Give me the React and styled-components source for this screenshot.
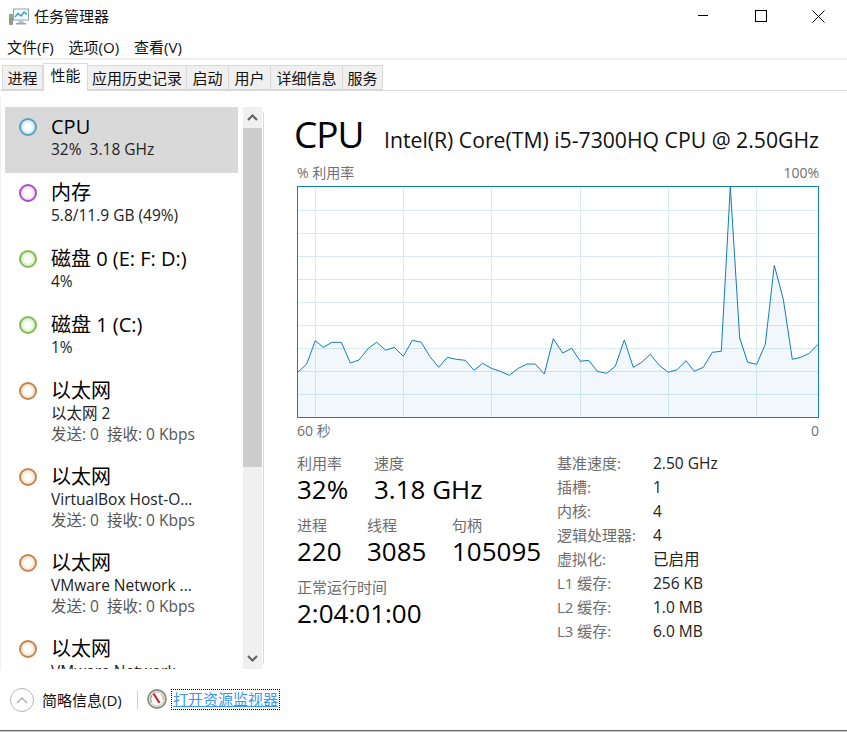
import React from 'react';
import styled, { createGlobalStyle } from 'styled-components';

const GlobalStyle = createGlobalStyle`
    html, body {
        margin: 0;
        padding: 0;
        background: #fff;
    }
    body {
        font-family: "Open Sans", "Noto Sans CJK SC", sans-serif;
        color: #000;
    }
`;

const Window = styled.div`
    width: 847px;
    height: 732px;
    display: flex;
    flex-direction: column;
    overflow: hidden;
    background: #fff;
`;

const TitleBar = styled.div`
    height: 34px;
    flex: none;
    display: flex;
    align-items: flex-start;
`;

const AppIcon = styled.svg`
    width: 20px;
    height: 18px;
    margin: 8px 5px 0 9px;
`;

const AppTitle = styled.div`
    font-size: 15px;
    line-height: 32px;
    flex: 1;
    color: #111;
`;

const WindowControls = styled.div`
    display: flex;
    gap: 1px;
`;

const WindowButton = styled.div`
    width: 57px;
    height: 32px;
    display: flex;
    align-items: center;
    justify-content: center;
`;

const MenuBar = styled.div`
    height: 24px;
    flex: none;
    display: flex;
    gap: 15px;
    padding-left: 7px;
    border-bottom: 2px solid #f0f0f0;
`;

const MenuItem = styled.div`
    font-size: 15px;
    line-height: 26px;
    color: #111;
`;

const TabStrip = styled.div`
    height: 31px;
    flex: none;
    display: flex;
    align-items: flex-end;
    padding-left: 2px;
    border-bottom: 1px solid #d9d9d9;
    box-sizing: border-box;
`;

const Tab = styled.div`
    width: ${(p) => p.$width}px;
    box-sizing: border-box;
    height: ${(p) => (p.$active ? 28 : 25)}px;
    margin-bottom: ${(p) => (p.$active ? -1 : 0)}px;
    font-size: 15px;
    line-height: ${(p) => (p.$active ? 23 : 25)}px;
    text-align: center;
    color: #111;
    background: ${(p) => (p.$active ? '#fff' : '#f0f0f0')};
    border: 1px solid #d9d9d9;
    border-left-width: ${(p) => (p.$first || p.$active ? 1 : 0)}px;
    border-bottom-width: ${(p) => (p.$active ? 0 : 1)}px;
    border-right-width: 1px;
    position: relative;
    z-index: ${(p) => (p.$active ? 1 : 0)};
`;

const Main = styled.div`
    flex: 1;
    min-height: 0;
    display: flex;
`;

const Sidebar = styled.div`
    width: 264px;
    flex: none;
    display: flex;
    box-sizing: border-box;
    margin-top: 6px;
    padding: 10px 0 1px 4px;
    border-left: 1px solid #f0f0f0;
`;

const List = styled.div`
    width: 233px;
    flex: none;
    overflow: hidden;
`;

const Item = styled.div`
    display: flex;
    box-sizing: border-box;
    padding: 8px 0 13px 14px;
    background: ${(p) => (p.$selected ? '#d9d9d9' : 'transparent')};
`;

const Dot = styled.div`
    width: 14px;
    height: 14px;
    margin-top: 3px;
    margin-right: 14px;
    flex: none;
    border-radius: 50%;
    border: 2px solid ${(p) => p.$color};
    background: radial-gradient(circle closest-side, #fff 45%, ${(p) => p.$tint} 100%);
`;

const ItemText = styled.div`
    min-width: 0;
    flex: 1;
`;

const ItemTitle = styled.div`
    font-size: 20px;
    line-height: 24px;
    white-space: nowrap;
`;

const ItemSub = styled.div`
    font-size: 15.5px;
    line-height: 21px;
    color: #222;
    white-space: pre;
`;

const ItemMuted = styled.div`
    font-size: 15.5px;
    line-height: 20px;
    color: #555;
    white-space: pre;
`;

const Scrollbar = styled.div`
    width: 19px;
    margin-left: 5px;
    flex: none;
    display: flex;
    flex-direction: column;
    background: #f0f0f0;
    position: relative;

    &::after {
        content: '';
        position: absolute;
        top: 5px;
        bottom: 5px;
        right: -2px;
        width: 1px;
        background: #d9d9d9;
    }
`;

const ScrollButton = styled.div`
    height: 21px;
    flex: none;
    display: flex;
    align-items: center;
    justify-content: center;
`;

const ScrollThumb = styled.div`
    height: 339px;
    flex: none;
    background: #cdcdcd;
`;

const ScrollTrack = styled.div`
    flex: 1;
`;

const Detail = styled.div`
    flex: 1;
    min-width: 0;
    box-sizing: border-box;
    padding: 16px 28px 0 33px;
`;

const Heading = styled.div`
    display: flex;
    align-items: baseline;
    justify-content: space-between;
    margin-left: -3px;
    height: 56px;
`;

const HeadingTitle = styled.div`
    font-size: 37px;
    line-height: 54px;
    letter-spacing: -1px;
`;

const HeadingModel = styled.div`
    font-size: 21.2px;
    color: #111;
    white-space: nowrap;
`;

const ChartCaption = styled.div`
    display: flex;
    justify-content: space-between;
    font-size: 14px;
    line-height: 20px;
    color: #707070;
`;

const ChartFrame = styled.svg`
    display: block;
    width: 522px;
    height: 232px;
    margin-top: 3px;
    margin-bottom: 3px;
`;

const StatsRow = styled.div`
    display: flex;
    justify-content: space-between;
    margin-top: 12px;
`;

const StatsLeft = styled.div`
    display: flex;
    flex-direction: column;
    gap: 10px;
`;

const StatGroup = styled.div`
    display: flex;
`;

const Stat = styled.div`
    width: ${(p) => p.$width}px;
`;

const StatLabel = styled.div`
    font-size: 15px;
    line-height: 20px;
    color: #6d6d6d;
`;

const StatValue = styled.div`
    font-size: 26px;
    line-height: 32px;
    white-space: nowrap;
`;

const Specs = styled.div`
    width: 262px;
    display: grid;
    grid-template-columns: 96px 1fr;
    grid-auto-rows: 24px;
    font-size: 15px;
    line-height: 20px;
`;

const SpecKey = styled.div`
    color: #6d6d6d;
`;

const SpecValue = styled.div`
    color: #222;
    font-size: 15.5px;
`;

const Footer = styled.div`
    height: 60px;
    flex: none;
    display: flex;
    align-items: center;
    padding-left: 10px;
`;

const CollapseButton = styled.div`
    width: 22px;
    height: 22px;
    margin-right: 8px;
    border: 1px solid #b5b5b5;
    border-radius: 50%;
    display: flex;
    align-items: center;
    justify-content: center;
`;

const FooterLabel = styled.div`
    font-size: 15px;
    line-height: 20px;
    margin-bottom: 1px;
    color: #111;
    white-space: nowrap;
    width: 85px;
`;

const FooterDivider = styled.div`
    width: 1px;
    height: 18px;
    margin: 0 9px 0 10px;
    background: #cfcfcf;
`;

const GaugeIcon = styled.svg`
    width: 20px;
    height: 20px;
    margin: 0 5px 3px 0;
`;

const MonitorLink = styled.div`
    font-size: 15px;
    line-height: 19px;
    margin-bottom: 2px;
    color: #3a96ee;
    text-decoration: underline;
    outline: 1px dotted #000;
    padding: 0 1px;
    white-space: nowrap;
`;

const BottomEdge = styled.div`
    height: 2px;
    flex: none;
    background: #c9c9c9;
    border-top: 1px solid #6a6a6a;
    box-sizing: border-box;
`;

const tabs = [
    { label: '进程', width: 41 },
    { label: '性能', width: 45, active: true },
    { label: '应用历史记录', width: 99 },
    { label: '启动', width: 42 },
    { label: '用户', width: 42 },
    { label: '详细信息', width: 72 },
    { label: '服务', width: 40 },
];

const BLUE = { color: '#5c9fc9', tint: '#cfe3f2' };
const PURPLE = { color: '#a950c4', tint: '#ecd6f3' };
const GREEN = { color: '#84bb55', tint: '#d6eac6' };
const ORANGE = { color: '#c8864c', tint: '#f5dfcb' };

const resources = [
    { title: 'CPU', sub: '32%  3.18 GHz', ...BLUE, selected: true },
    { title: '内存', sub: '5.8/11.9 GB (49%)', ...PURPLE },
    { title: '磁盘 0 (E: F: D:)', sub: '4%', ...GREEN },
    { title: '磁盘 1 (C:)', sub: '1%', ...GREEN },
    { title: '以太网', sub: '以太网 2', muted: '发送: 0  接收: 0 Kbps', ...ORANGE },
    { title: '以太网', sub: 'VirtualBox Host-O...', muted: '发送: 0  接收: 0 Kbps', ...ORANGE },
    { title: '以太网', sub: 'VMware Network ...', muted: '发送: 0  接收: 0 Kbps', ...ORANGE },
    { title: '以太网', sub: 'VMware Network ...', ...ORANGE },
];

const specs = [
    ['基准速度:', '2.50 GHz'],
    ['插槽:', '1'],
    ['内核:', '4'],
    ['逻辑处理器:', '4'],
    ['虚拟化:', '已启用'],
    ['L1 缓存:', '256 KB'],
    ['L2 缓存:', '1.0 MB'],
    ['L3 缓存:', '6.0 MB'],
];

// page coordinates of the usage line, shifted into the chart's own space below
const usage = [
    [297.3, 372.7], [306.7, 364], [315.3, 340.7], [323.3, 347.3], [332, 342.3], [341.3, 342.3],
    [350.3, 363], [359, 360], [368.3, 348.3], [376.7, 342.3], [385.7, 350.3], [394.3, 347.3],
    [403.3, 356.3], [412.3, 340.3], [421.3, 342.3], [430, 356.7], [438.7, 367.3], [447.3, 357.3],
    [456.3, 359.3], [465.3, 360.3], [474, 370.3], [482.7, 363.3], [491.3, 368.3], [500.3, 371.3],
    [509.3, 375.3], [518.3, 368.3], [527, 364], [535.3, 364], [544.3, 374], [553.3, 338.7],
    [562.7, 353], [571.7, 348.3], [580.3, 361.3], [588.7, 360.3], [597.3, 371.3], [606.7, 373.3],
    [615.3, 366.3], [624.3, 340], [633.3, 367.3], [641.7, 362.3], [650.3, 354.3], [659.3, 365.3],
    [668.3, 372.3], [677, 369.7], [686, 360.7], [694.3, 371.3], [703.3, 367.3], [712.3, 352.3],
    [721.3, 351.3], [730.3, 186.7], [739.7, 338], [747.7, 362.3], [756.7, 364.3], [765.3, 344.3],
    [774.3, 265.3], [783.3, 299.3], [792.3, 359.3], [800.7, 357.3], [809.3, 353.3], [818, 344.3],
];

const linePoints = usage.map(([x, y]) => `${(x - 297).toFixed(1)},${(y - 186).toFixed(1)}`).join(' ');
const areaPoints = `0.5,231.5 ${linePoints} 521.5,231.5`;
const gridRows = [24, 47, 70, 93, 116, 139, 162, 185, 208];
const gridCols = [18.5, 106.5, 194.5, 283.5, 371.5, 459.5];

const Chevron = ({ up }) => (
    <svg width="11" height="7" viewBox="0 0 11 7">
        <path d={up ? 'M1 6 L5.5 1.5 L10 6' : 'M1 1 L5.5 5.5 L10 1'} fill="none" stroke="#606060" strokeWidth="2" />
    </svg>
);

const App = () => (
    <Window>
        <GlobalStyle />
        <TitleBar>
            <AppIcon viewBox="0 0 20 18">
                <rect x="0" y="6" width="4" height="11" rx="1" fill="#8f9a8f" />
                <rect x="1" y="7" width="2" height="3" fill="#7fc06a" />
                <rect x="4.5" y="1" width="15" height="11" fill="#f4fafd" stroke="#8aa3b3" />
                <path d="M6 9 L9 5.5 L12 8 L15 4 L18 6.5" fill="none" stroke="#2f9ad0" strokeWidth="1.3" />
                <path d="M10 12.5 H14 L15 15 H9 Z" fill="#b8c2c8" />
                <rect x="7" y="15" width="10" height="1.5" fill="#9aa5ab" />
            </AppIcon>
            <AppTitle>任务管理器</AppTitle>
            <WindowControls>
                <WindowButton>
                    <svg width="10" height="10" viewBox="0 0 10 10">
                        <path d="M0 4.5 H10" stroke="#000" strokeWidth="1" />
                    </svg>
                </WindowButton>
                <WindowButton>
                    <svg width="12" height="12" viewBox="0 0 12 12">
                        <rect x="0.5" y="0.5" width="11" height="11" fill="none" stroke="#000" strokeWidth="1" />
                    </svg>
                </WindowButton>
                <WindowButton>
                    <svg width="13" height="13" viewBox="0 0 13 13">
                        <path d="M0.5 0.5 L12.5 12.5 M12.5 0.5 L0.5 12.5" stroke="#000" strokeWidth="1" />
                    </svg>
                </WindowButton>
            </WindowControls>
        </TitleBar>
        <MenuBar>
            <MenuItem>文件(F)</MenuItem>
            <MenuItem>选项(O)</MenuItem>
            <MenuItem>查看(V)</MenuItem>
        </MenuBar>
        <TabStrip>
            {tabs.map((tab, i) => (
                <Tab key={tab.label} $width={tab.width} $active={tab.active} $first={i === 0}>
                    {tab.label}
                </Tab>
            ))}
        </TabStrip>
        <Main>
            <Sidebar>
                <List>
                    {resources.map((res, i) => (
                        <Item key={i} $selected={res.selected}>
                            <Dot $color={res.color} $tint={res.tint} />
                            <ItemText>
                                <ItemTitle>{res.title}</ItemTitle>
                                <ItemSub>{res.sub}</ItemSub>
                                {res.muted && <ItemMuted>{res.muted}</ItemMuted>}
                            </ItemText>
                        </Item>
                    ))}
                </List>
                <Scrollbar>
                    <ScrollButton><Chevron up /></ScrollButton>
                    <ScrollThumb />
                    <ScrollTrack />
                    <ScrollButton><Chevron /></ScrollButton>
                </Scrollbar>
            </Sidebar>
            <Detail>
                <Heading>
                    <HeadingTitle>CPU</HeadingTitle>
                    <HeadingModel>Intel(R) Core(TM) i5-7300HQ CPU @ 2.50GHz</HeadingModel>
                </Heading>
                <ChartCaption>
                    <span>% 利用率</span>
                    <span>100%</span>
                </ChartCaption>
                <ChartFrame viewBox="0 0 522 232">
                    {gridRows.map((y) => (
                        <path key={y} d={`M0 ${y}.5 H522`} stroke="#d9eaf4" strokeWidth="1" />
                    ))}
                    {gridCols.map((x) => (
                        <path key={x} d={`M${x} 0 V232`} stroke="#d9eaf4" strokeWidth="1" />
                    ))}
                    <polygon points={areaPoints} fill="#117dbb" fillOpacity="0.06" />
                    <polyline points={linePoints} fill="none" stroke="#117dbb" strokeWidth="1" />
                    <rect x="0.5" y="0.5" width="521" height="231" fill="none" stroke="#117dbb" strokeWidth="1" />
                </ChartFrame>
                <ChartCaption>
                    <span>60 秒</span>
                    <span>0</span>
                </ChartCaption>
                <StatsRow>
                    <StatsLeft>
                        <StatGroup>
                            <Stat $width={77}>
                                <StatLabel>利用率</StatLabel>
                                <StatValue>32%</StatValue>
                            </Stat>
                            <Stat $width={160}>
                                <StatLabel>速度</StatLabel>
                                <StatValue>3.18 GHz</StatValue>
                            </Stat>
                        </StatGroup>
                        <StatGroup>
                            <Stat $width={70}>
                                <StatLabel>进程</StatLabel>
                                <StatValue>220</StatValue>
                            </Stat>
                            <Stat $width={85}>
                                <StatLabel>线程</StatLabel>
                                <StatValue>3085</StatValue>
                            </Stat>
                            <Stat $width={100}>
                                <StatLabel>句柄</StatLabel>
                                <StatValue>105095</StatValue>
                            </Stat>
                        </StatGroup>
                        <Stat $width={200}>
                            <StatLabel>正常运行时间</StatLabel>
                            <StatValue>2:04:01:00</StatValue>
                        </Stat>
                    </StatsLeft>
                    <Specs>
                        {specs.map(([key, value]) => (
                            <React.Fragment key={key}>
                                <SpecKey>{key}</SpecKey>
                                <SpecValue>{value}</SpecValue>
                            </React.Fragment>
                        ))}
                    </Specs>
                </StatsRow>
            </Detail>
        </Main>
        <Footer>
            <CollapseButton>
                <svg width="12" height="8" viewBox="0 0 12 8">
                    <path d="M1 7 L6 2 L11 7" fill="none" stroke="#a8a8a8" strokeWidth="1.3" />
                </svg>
            </CollapseButton>
            <FooterLabel>简略信息(D)</FooterLabel>
            <FooterDivider />
            <GaugeIcon viewBox="0 0 20 20">
                <circle cx="10" cy="10" r="9" fill="#e8e8e8" stroke="#8d8d80" strokeWidth="1.8" />
                <circle cx="10" cy="10" r="6.6" fill="#fff" stroke="#c5c5bd" strokeWidth="0.8" />
                <path d="M5 6 A7 7 0 0 0 4.5 13" fill="none" stroke="#6fb06a" strokeWidth="1" />
                <path d="M15 5.5 A7 7 0 0 1 16 11" fill="none" stroke="#e0a070" strokeWidth="1" />
                <path d="M6.5 4.5 L12.5 14" stroke="#c42b2b" strokeWidth="2.2" />
            </GaugeIcon>
            <MonitorLink>打开资源监视器</MonitorLink>
        </Footer>
        <BottomEdge />
    </Window>
);

export default App;
